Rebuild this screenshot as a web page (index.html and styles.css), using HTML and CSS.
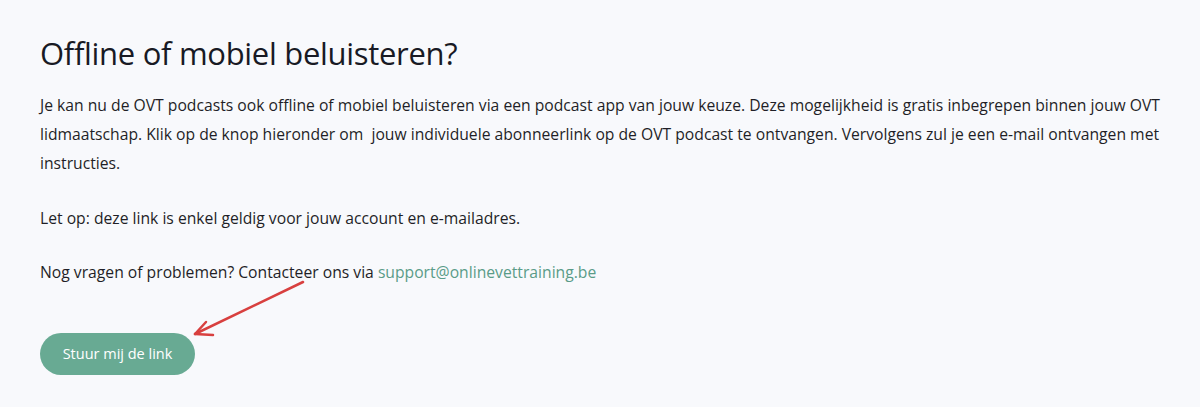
FILE: index.html
```html
<!DOCTYPE html>
<html lang="nl">
<head>
    <meta charset="UTF-8">
    <meta name="viewport" content="width=device-width, initial-scale=1.0">
    <title>Offline of mobiel beluisteren?</title>
    <link rel="stylesheet" href="styles.css">
</head>
<body>

    <div class="podcast-box">
        <h1>Offline of mobiel beluisteren?</h1>
        <p>Je kan nu de OVT podcasts ook offline of mobiel beluisteren via een podcast app van jouw keuze. Deze mogelijkheid is gratis inbegrepen binnen jouw OVT lidmaatschap. Klik op de knop hieronder om &nbsp;jouw individuele abonneerlink op de OVT podcast te ontvangen. Vervolgens zul je een e-mail ontvangen met instructies.</p>
        <p>Let op: deze link is enkel geldig voor jouw account en e-mailadres.</p>
        <p>Nog vragen of problemen? Contacteer ons via <a href="#">support@onlinevettraining.be</a></p>
        <button class="send-button">Stuur mij de link</button>

        <!-- rode pijl naar de knop -->
        <svg class="arrow" width="120" height="60" viewBox="0 0 120 60">
            <path d="M113 2 L5 54" stroke="#d8403f" stroke-width="2.5" fill="none" stroke-linecap="round"/>
            <path d="M16 42 L5 54 L23 55" stroke="#d8403f" stroke-width="2.5" fill="none" stroke-linecap="round" stroke-linejoin="round"/>
        </svg>
    </div>

</body>
</html>
```

FILE: styles.css
```css
body {
    margin: 0;
    background-color: #f8f9fc;
    font-family: "Open Sans", Arial, sans-serif;
    color: #1f1f27;
}
.podcast-box {
    position: relative;
    padding: 33px 40px 30px;
}
h1 {
    margin: 0 0 18px;
    font-size: 31px;
    font-weight: 400;
    line-height: 40px;
    color: #181a24;
    letter-spacing: -0.3px;
}
p {
    margin: 0 0 25.5px;
    font-size: 15.7px;
    line-height: 29px;
}
a { color: #5a9c88; text-decoration: none; }
.send-button {
    margin-top: 20px;
    width: 155px;
    height: 42px;
    border: none;
    border-radius: 21px;
    background-color: #68aa93;
    color: white;
    font-family: "Open Sans", Arial, sans-serif;
    font-size: 14.5px;
    font-weight: 500;
    cursor: pointer;
}
.arrow {
    position: absolute;
    left: 190px;
    top: 280px;
}
```
